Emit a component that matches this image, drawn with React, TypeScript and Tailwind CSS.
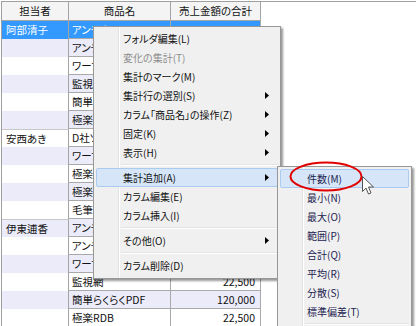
import { ReactNode } from "react";

type Row = { owner: string; product: string; total: string };

// totals of rows 1-14 sit under the context menu, so they are left empty
const rows: Row[] = [
  { owner: "阿部清子", product: "アンチウイルス", total: "" },
  { owner: "", product: "アンチスパム", total: "" },
  { owner: "", product: "ワープロ", total: "" },
  { owner: "", product: "監視網", total: "" },
  { owner: "", product: "簡単らくらく", total: "" },
  { owner: "", product: "極楽RDB", total: "" },
  { owner: "安西あき", product: "D社ソフト", total: "" },
  { owner: "", product: "ワープロ", total: "" },
  { owner: "", product: "極楽RDB", total: "" },
  { owner: "", product: "極楽表計算", total: "" },
  { owner: "", product: "毛筆ソフト", total: "" },
  { owner: "伊東逋香", product: "アンチウイルス", total: "" },
  { owner: "", product: "アンチスパム", total: "" },
  { owner: "", product: "ワープロ", total: "" },
  { owner: "", product: "監視網", total: "22,500" },
  { owner: "", product: "簡単らくらくPDF", total: "120,000" },
  { owner: "", product: "極楽RDB", total: "22,500" },
];

type Item =
  | { sep: true }
  | { label: string; sub?: boolean; disabled?: boolean; active?: boolean; sep?: false };

const mainItems: Item[] = [
  { label: "フォルダ編集(L)" },
  { label: "変化の集計(T)", disabled: true },
  { label: "集計のマーク(M)" },
  { label: "集計行の選別(S)", sub: true },
  { label: "カラム「商品名」の操作(Z)", sub: true },
  { label: "固定(K)", sub: true },
  { label: "表示(H)", sub: true },
  { sep: true },
  { label: "集計追加(A)", sub: true, active: true },
  { label: "カラム編集(E)" },
  { label: "カラム挿入(I)" },
  { sep: true },
  { label: "その他(O)", sub: true },
  { sep: true },
  { label: "カラム削除(D)" },
];

const subItems: Item[] = [
  { label: "件数(M)", active: true },
  { label: "最小(N)" },
  { label: "最大(O)" },
  { label: "範囲(P)" },
  { label: "合計(Q)" },
  { label: "平均(R)" },
  { label: "分散(S)" },
  { label: "標準偏差(T)" },
  { sep: true },
];

function Arrow() {
  return (
    <svg width="4" height="7" viewBox="0 0 4 7" className="ml-auto mr-[8px] shrink-0">
      <path d="M0 0 L4 3.5 L0 7 Z" fill="#000" />
    </svg>
  );
}

function MenuList({ items, textColor }: { items: Item[]; textColor: string }) {
  return (
    <div className="relative flex h-full flex-col p-[2px]">
      <div className="absolute top-0 bottom-0 left-[24px] w-[2px] border-l border-[#e2e3e3] bg-white" />
      {items.map((it, i) =>
        it.sep ? (
          <div key={i} className="relative ml-[25px] flex h-[6px] items-center">
            <div className="h-[2px] w-full border-t border-[#e2e3e3] bg-white" />
          </div>
        ) : (
          <div
            key={i}
            className={
              "relative flex h-[19px] items-center whitespace-nowrap rounded-[2px] border pl-[26px] " +
              (it.active ? "border-[#a8cbef] bg-[#d6e6f8]" : "border-transparent")
            }
          >
            <span
              className={it.disabled ? "text-[#8d8d8d]" : ""}
              style={it.disabled ? undefined : { color: textColor }}
            >
              {it.label}
            </span>
            {it.sub && <Arrow />}
          </div>
        )
      )}
    </div>
  );
}

function Cell({ children, className }: { children?: ReactNode; className: string }) {
  return (
    <div className={"flex h-[18px] items-center overflow-hidden whitespace-nowrap pt-[1px] " + className}>
      {children}
    </div>
  );
}

export default function App() {
  return (
    <div className="relative h-[326px] w-[416px] overflow-hidden bg-white pl-[1px] pt-[1px] font-['Noto_Sans_CJK_JP',sans-serif] text-[10.5px] leading-none text-[#111] [font-feature-settings:'palt']">
      <div className="h-full border-l border-t border-[#a0a0a0]">
        <div className="grid w-[259px] grid-cols-[67px_102px_90px]">
          {["担当者", "商品名", "売上金額の合計"].map((h) => (
            <div
              key={h}
              className="flex h-[19px] items-center justify-center border-r border-b border-[#a4a4a4] bg-[#f4f4f4]"
            >
              {h}
            </div>
          ))}
          {rows.map((r, i) => {
            const sel = i === 0;
            const alt = i % 2 === 1;
            const bg = sel ? "bg-[#3399ff] text-white" : alt ? "bg-[#ebebfa]" : "bg-white";
            const groupTop = i === 6 || i === 11 ? "border-t border-t-[#c8c8c8]" : "";
            return (
              <div key={i} className="contents">
                <Cell className={"border-r border-[#a4a4a4] pl-[4px] " + bg + " " + groupTop}>{r.owner}</Cell>
                <Cell className={"border-r border-b border-[#a9a9a9] pl-[3px] " + bg}>{r.product}</Cell>
                <Cell className={"justify-end border-r border-b border-[#a9a9a9] pr-[5px] " + bg}>{r.total}</Cell>
              </div>
            );
          })}
        </div>
      </div>

      {/* context menu */}
      <div className="absolute left-[93px] top-[26px] h-[253px] w-[188px] border border-[#979797] bg-[#f0f0f0] text-[10px] shadow-[2px_2px_2px_rgba(0,0,0,0.4)]">
        <MenuList items={mainItems} textColor="#111" />
      </div>

      {/* submenu */}
      <div className="absolute left-[277px] top-[166px] h-[200px] w-[135px] border border-[#979797] bg-[#f0f0f0] text-[10px] shadow-[2px_2px_2px_rgba(0,0,0,0.4)]">
        <MenuList items={subItems} textColor="#1c2250" />
      </div>

      {/* red annotation */}
      <svg className="absolute left-[289px] top-[161px]" width="74" height="31" viewBox="0 0 74 31">
        <ellipse cx="37" cy="15.5" rx="35.5" ry="14" fill="none" stroke="#e10000" strokeWidth="2" />
      </svg>

      {/* cursor */}
      <svg className="absolute left-[362px] top-[176px]" width="13" height="20" viewBox="0 0 13 20">
        <path
          d="M0.5 0.5 L0.5 15.5 L4 12 L6.5 18 L9 17 L6.5 11 L11.5 11 Z"
          fill="#fff"
          stroke="#555"
          strokeWidth="1"
          strokeLinejoin="round"
        />
      </svg>
    </div>
  );
}
